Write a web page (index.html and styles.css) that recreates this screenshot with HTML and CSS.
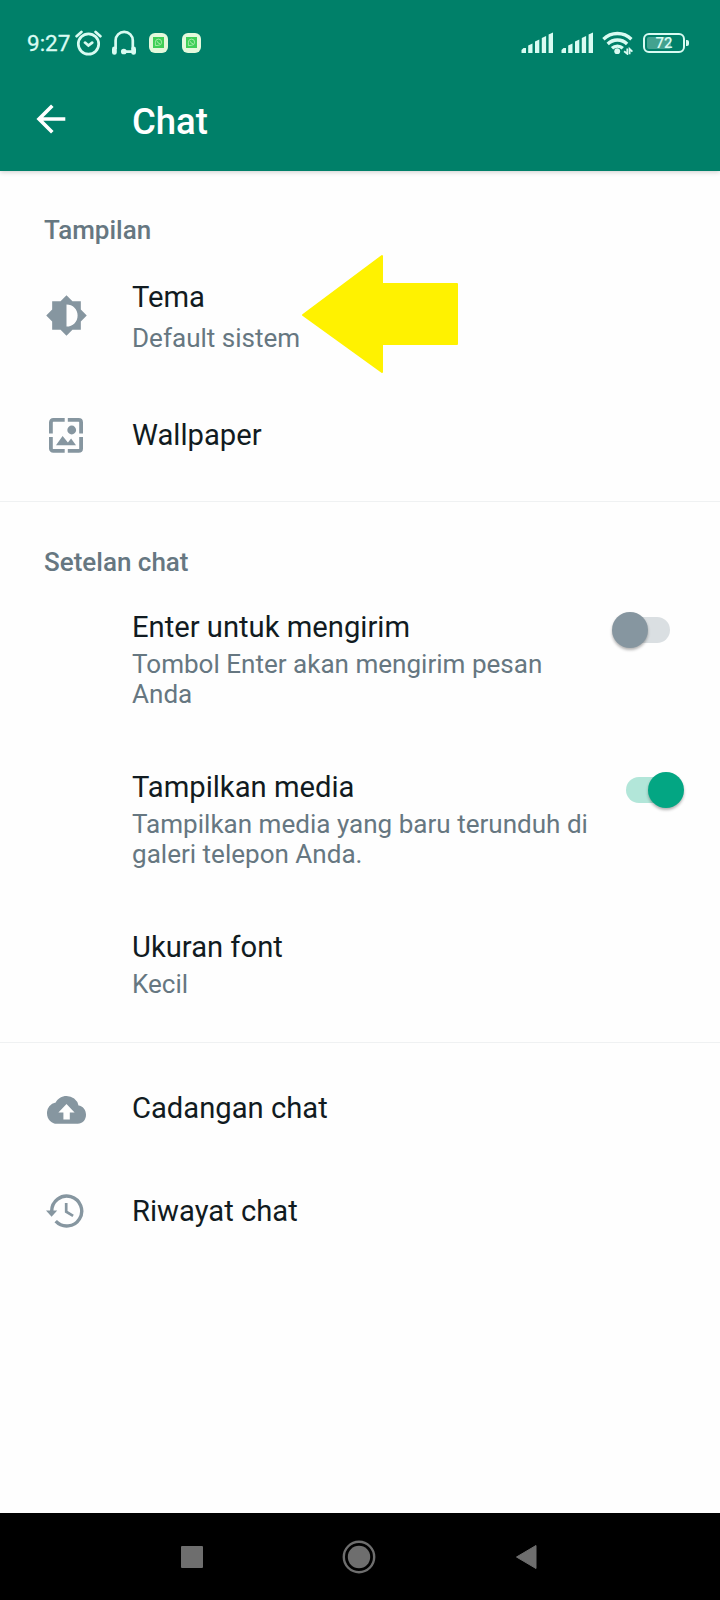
FILE: index.html
```
<!DOCTYPE html>
<html lang="id">
<head>
  <meta charset="UTF-8" />
  <meta name="viewport" content="width=device-width, initial-scale=1.0" />
  <title>Chat</title>
  <link rel="stylesheet" href="styles.css">
</head>
<body>
  <div class="screen">
    <header class="header">
      <div class="status-bar">
        <span class="time">9:27</span>
        <svg class="alarm" width="27" height="26" viewBox="0 0 27 26" fill="none" stroke="#d9fbf2" stroke-width="2.7" stroke-linecap="round">
          <circle cx="13.5" cy="14" r="10.2" />
          <path d="M1.6 6.2 6.4 2M25.4 6.2 20.6 2M10 12.6l3.4 3 3.8-3" />
        </svg>
        <svg class="headset" width="26" height="26" viewBox="0 0 26 26" fill="none" stroke="#d9fbf2" stroke-width="2.7">
          <path d="M4.6 19V10.5a8.6 8.6 0 0 1 17.2 0V19M13 21.6h10" />
          <path d="M3.4 19v3.4M22.6 19v3.4" stroke-width="4.8" stroke-linecap="round" />
          <circle cx="12.8" cy="21.5" r="1.5" fill="#d9fbf2" />
        </svg>
        <span class="chip"><svg width="11" height="11" viewBox="0 0 11 11"><rect width="11" height="11" fill="#3fcf57" /><path d="M2.4 8.6V5.2a3.1 3.1 0 1 1 3.1 3.1zM4.2 4.2q.5 2.3 2.8 2.6" fill="none" stroke="#b9f3b8" stroke-width=".8" /></svg></span>
        <span class="chip"><svg width="11" height="11" viewBox="0 0 11 11"><rect width="11" height="11" fill="#3fcf57" /><path d="M2.4 8.6V5.2a3.1 3.1 0 1 1 3.1 3.1zM4.2 4.2q.5 2.3 2.8 2.6" fill="none" stroke="#b9f3b8" stroke-width=".8" /></svg></span>
        <div class="status-right">
          <svg width="33" height="22" viewBox="0 0 33 22" fill="#d9fbf2">
            <path d="M.5 21v-3l2-2H5v5zM7.2 21v-7.5l4.3-2V21zM14 21V9.5l4.3-2V21zM20.8 21V6l4.3-2v17zM27.6 21V2.5l4.4-2V21z" />
          </svg>
          <svg width="33" height="22" viewBox="0 0 33 22" fill="#d9fbf2">
            <path d="M.5 21v-3l2-2H5v5zM7.2 21v-7.5l4.3-2V21zM14 21V9.5l4.3-2V21zM20.8 21V6l4.3-2v17zM27.6 21V2.5l4.4-2V21z" />
          </svg>
          <svg class="wifi" width="31" height="24" viewBox="0 0 31 24" fill="none" stroke="#d9fbf2" stroke-width="3.3">
            <path d="M1.4 8.2a20 20 0 0 1 28 0M5.7 13a13.8 13.8 0 0 1 19.4 0M10 17.2a7.8 7.8 0 0 1 10.8 0" />
            <circle cx="15.2" cy="20.2" r="2.9" fill="#d9fbf2" stroke="none" />
            <path d="M25.3 17.6v5.2l-3.2-2.6M27.6 23.2v-5.4l2.8 2.8" stroke-width="1.8" />
          </svg>
          <div class="battery"><span class="battery-level"></span><span class="battery-text">72</span></div>
        </div>
      </div>
      <div class="toolbar">
        <svg class="back" width="30" height="30" viewBox="0 0 30 30" fill="none" stroke="#fff" stroke-width="3.6">
          <path d="M29.3 15H3M16.3 1.7 3 15l13.3 13.3" />
        </svg>
        <h1>Chat</h1>
      </div>
    </header>

    <section class="section display">
      <h2>Tampilan</h2>
      <div class="item theme">
        <svg class="icon" width="43" height="43" viewBox="0 0 24 24" fill="#8696a0">
          <path d="M20 15.31 23.31 12 20 8.69V4h-4.69L12 .69 8.69 4H4v4.69L.69 12 4 15.31V20h4.69L12 23.31 15.31 20H20v-4.69zM12 18.2V5.8c3.6 0 6.2 2.7 6.2 6.2s-2.6 6.2-6.2 6.2z" />
        </svg>
        <div class="text">
          <p class="title">Tema</p>
          <p class="sub">Default sistem</p>
        </div>
        <svg class="pointer" width="158" height="122" viewBox="0 0 158 122" fill="#fff200" stroke="#fff200" stroke-width="2" stroke-linejoin="round">
          <path d="M3 62 82 3v28h75v60H82v28z" />
        </svg>
      </div>
      <div class="item single">
        <svg class="icon" width="34" height="35" viewBox="0 0 34 35" fill="none" stroke="#8696a0" stroke-width="3.8">
          <path d="M1.9 15.6V4.4q0-2.5 2.5-2.5h11.3M18.8 1.9h10.8q2.5 0 2.5 2.5v11.2M32.1 19.1v11.3q0 2.5-2.5 2.5H18.8M15.7 32.9H4.4q-2.5 0-2.5-2.5V19.1" />
          <circle cx="22.7" cy="12" r="4.4" fill="#8696a0" stroke="none" />
          <path d="M7 27.2 13.6 18l5.3 6.4 3.2-4 4.9 6.8z" fill="#8696a0" stroke="none" />
        </svg>
        <div class="text"><p class="title">Wallpaper</p></div>
      </div>
    </section>

    <section class="section settings">
      <h2>Setelan chat</h2>
      <div class="item">
        <div class="text">
          <p class="title">Enter untuk mengirim</p>
          <p class="sub">Tombol Enter akan mengirim pesan Anda</p>
        </div>
        <div class="switch"></div>
      </div>
      <div class="item">
        <div class="text">
          <p class="title">Tampilkan media</p>
          <p class="sub">Tampilkan media yang baru terunduh di galeri telepon Anda.</p>
        </div>
        <div class="switch on"></div>
      </div>
      <div class="item">
        <div class="text">
          <p class="title">Ukuran font</p>
          <p class="sub">Kecil</p>
        </div>
      </div>
    </section>

    <section class="section history">
      <div class="item single">
        <svg class="icon cloud" width="39" height="29" viewBox="0 0 39 29" fill="#8696a0">
          <path d="M31.5 10.4A12.2 12.2 0 0 0 19.5 1C14.8 1 10.8 3.600 8.700 7.500A10.300 10.300 0 0 0 0 18.200C0 24.200 4.400 28.800 10 28.800H30.800C35.400 28.800 39 25 39 19.800C39 14.800 35.800 10.700 31.500 10.400zM22.800 17.500v7h-6.400v-7h-5l8.100-8.400 8.100 8.400z" />
        </svg>
        <div class="text"><p class="title">Cadangan chat</p></div>
      </div>
      <div class="item single">
        <svg class="icon clock" width="38" height="36" viewBox="0 0 38 36" fill="none" stroke="#8696a0" stroke-width="3.4">
          <path d="M5.7 18a15 15 0 1 1 4 10.2" />
          <path d="M0 17.4h11.2l-5.6 6.4z" fill="#8696a0" stroke="none" />
          <path d="M20.2 10v8.7l6.9 4.2" stroke-width="2.7" />
        </svg>
        <div class="text"><p class="title">Riwayat chat</p></div>
      </div>
    </section>

    <nav class="nav-bar">
      <svg width="22" height="22" viewBox="0 0 22 22"><rect width="22" height="22" rx="1" fill="#6e6e6e" /></svg>
      <svg width="34" height="34" viewBox="0 0 34 34"><circle cx="17" cy="17" r="15.2" fill="none" stroke="#6e6e6e" stroke-width="2.4" /><circle cx="17" cy="17" r="11.2" fill="#6e6e6e" /></svg>
      <svg width="22" height="26" viewBox="0 0 22 26"><path d="M1.5 13 21 1.5v23z" fill="#6e6e6e" stroke="#6e6e6e" stroke-linejoin="round" /></svg>
    </nav>
  </div>
</body>
</html>
```
FILE: styles.css
```
* {
    padding: 0;
    margin: 0;
    box-sizing: border-box;
    font-family: Roboto, sans-serif;
}

body {
    background-color: #fefefe;
}

.screen {
    display: flex;
    flex-direction: column;
    width: 720px;
    height: 1600px;
    overflow: hidden;
}

/* Header */
.header {
    height: 170.5px;
    flex-shrink: 0;
    background-color: #008069;
    box-shadow: 0 1px 5px rgba(0, 0, 0, 0.2);
}

.status-bar {
    display: flex;
    align-items: center;
    height: 85px;
    padding: 0 31px 0 27px;
    color: #d9fbf2;
}

.time {
    width: 48px;
    font-size: 22.5px;
    -webkit-text-stroke: 0.3px #d9fbf2;
}

.headset {
    margin: 0 12px 0 9px;
}

.chip {
    display: flex;
    align-items: center;
    justify-content: center;
    width: 19px;
    height: 20px;
    margin-right: 14px;
    border-radius: 6px;
    background-color: #e4f9dc;
}

.status-right {
    display: flex;
    align-items: center;
    margin-left: auto;
    gap: 7px;
}

.wifi {
    margin: 0 3px 0 1px;
}

.battery {
    position: relative;
    display: flex;
    align-items: center;
    justify-content: center;
    width: 42px;
    height: 20px;
    margin-right: 4px;
    border: 2px solid #d9fbf2;
    border-radius: 6px;
}

.battery::after {
    content: "";
    position: absolute;
    right: -6px;
    top: 5px;
    width: 3px;
    height: 6px;
    border-radius: 0 2px 2px 0;
    background-color: #d9fbf2;
}

.battery-level {
    position: absolute;
    left: 2px;
    top: 2px;
    bottom: 2px;
    width: 24px;
    border-radius: 2px;
    background-color: #43a28f;
}

.battery-text {
    position: relative;
    font-size: 15px;
    font-weight: 500;
}

.toolbar {
    display: flex;
    align-items: center;
    height: 73px;
    padding-left: 36px;
    color: #fff;
}

.back {
    margin: 0 66px 5px 0;
}

h1 {
    font-size: 36.5px;
    font-weight: 500;
    line-height: 42px;
}

/* Settings list */
.section {
    position: relative;
    flex-shrink: 0;
    border-bottom: 1px solid #eff1f2;
}

.display {
    height: 331.5px;
    padding-top: 44.5px;
}

.settings {
    height: 541px;
    padding-top: 44.5px;
}

.history {
    padding-top: 13.5px;
    border-bottom: none;
}

h2 {
    padding-left: 44px;
    font-size: 26px;
    font-weight: 500;
    line-height: 30px;
    color: #667781;
}

.item {
    position: relative;
    display: flex;
    height: 160px;
    padding: 33px 38px 0 132px;
}

.icon {
    flex-shrink: 0;
}

.theme {
    height: 130px;
    padding: 35px 0 0 44.5px;
}

.theme .icon {
    margin: 13.5px 44.5px 0 0;
}

.theme .sub {
    margin-top: 8.5px;
}

.single {
    align-items: center;
    height: 103px;
    padding: 0 0 0 46.5px;
}

.display .single {
    height: 120px;
    padding-left: 49px;
}

.single .icon {
    margin-right: 46.5px;
}

.display .single .icon {
    margin-right: 49px;
}

.single .cloud {
    margin-top: 2px;
}

.single .clock {
    margin: 0 48.5px 0 -1px;
}

.text {
    width: 462px;
}

.title {
    font-size: 29.2px;
    line-height: 34px;
    color: #111b21;
}

.sub {
    margin-top: 5.4px;
    font-size: 26.05px;
    line-height: 30.4px;
    color: #667781;
}

.pointer {
    position: absolute;
    left: 300px;
    top: 8px;
}

/* Switches */
.switch {
    position: relative;
    width: 56px;
    height: 26px;
    margin: 7px 12px 0 auto;
    border-radius: 13px;
    background-color: #dadfe2;
}

.switch::after {
    content: "";
    position: absolute;
    left: -2px;
    top: -5px;
    width: 36px;
    height: 36px;
    border-radius: 50%;
    background-color: #8696a0;
    box-shadow: 0 2px 3px rgba(0, 0, 0, 0.3);
}

.switch.on {
    margin-right: 0;
    background-color: #b2e6d9;
}

.switch.on::after {
    left: 22px;
    background-color: #03a683;
}

/* Bottom navigation */
.nav-bar {
    display: flex;
    align-items: center;
    justify-content: space-between;
    height: 87px;
    margin-top: auto;
    padding: 0 183px 0 181px;
    background-color: #000;
}
```
